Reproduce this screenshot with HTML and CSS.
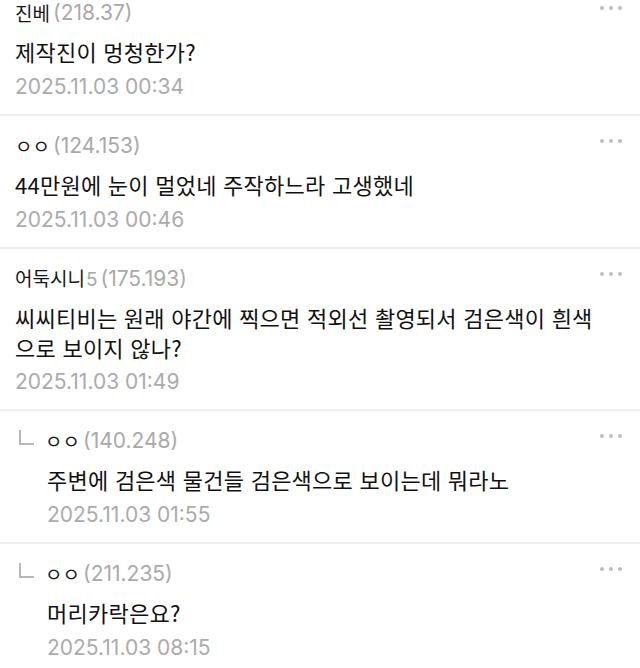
FILE: index.html
```html
<!DOCTYPE html>
<html lang="ko">
<head>
<meta charset="utf-8">
<link rel="stylesheet" href="styles.css">
</head>
<body>
<div class="list">
  <div class="comment first">
    <div class="meta">
      <div class="who"><span class="name">진베</span><span class="ip">(218.37)</span></div>
      <span class="more"><i></i><i></i><i></i></span>
    </div>
    <div class="body">
      <p class="text">제작진이 멍청한가?</p>
      <p class="date">2025.11.03 00:34</p>
    </div>
  </div>
  <div class="comment">
    <div class="meta">
      <div class="who"><span class="name">ㅇㅇ</span><span class="ip">(124.153)</span></div>
      <span class="more"><i></i><i></i><i></i></span>
    </div>
    <div class="body">
      <p class="text">44만원에 눈이 멀었네 주작하느라 고생했네</p>
      <p class="date">2025.11.03 00:46</p>
    </div>
  </div>
  <div class="comment">
    <div class="meta">
      <div class="who"><span class="name">어둑시니<span class="suffix">5</span></span><span class="ip">(175.193)</span></div>
      <span class="more"><i></i><i></i><i></i></span>
    </div>
    <div class="body">
      <p class="text">씨씨티비는 원래 야간에 찍으면 적외선 촬영되서 검은색이 흰색<br>으로 보이지 않나?</p>
      <p class="date short">2025.11.03 01:49</p>
    </div>
  </div>
  <div class="comment reply">
    <div class="meta">
      <div class="who"><span class="arrow"></span><span class="name">ㅇㅇ</span><span class="ip">(140.248)</span></div>
      <span class="more"><i></i><i></i><i></i></span>
    </div>
    <div class="body">
      <p class="text">주변에 검은색 물건들 검은색으로 보이는데 뭐라노</p>
      <p class="date">2025.11.03 01:55</p>
    </div>
  </div>
  <div class="comment reply last">
    <div class="meta">
      <div class="who"><span class="arrow"></span><span class="name">ㅇㅇ</span><span class="ip">(211.235)</span></div>
      <span class="more"><i></i><i></i><i></i></span>
    </div>
    <div class="body">
      <p class="text">머리카락은요?</p>
      <p class="date">2025.11.03 08:15</p>
    </div>
  </div>
</div>
</body>
</html>
```
FILE: styles.css
```css
html, body {
  margin: 0;
  padding: 0;
  background: #ffffff;
}
body {
  font-family: "Inter", "Noto Sans CJK KR", sans-serif;
  color: #111111;
  width: 640px;
  height: 668px;
  overflow: hidden;
}
.comment {
  padding: 17px 18px 14px 15px;
  border-bottom: 2px solid #efefef;
}
.comment.first {
  padding-top: 0;
}
.comment.last {
  border-bottom: none;
}
.meta {
  display: flex;
  justify-content: space-between;
  align-items: flex-start;
  height: 26px;
}
.who {
  display: flex;
  align-items: center;
  height: 26px;
  line-height: 26px;
}
.name {
  font-family: "Noto Sans CJK KR", sans-serif;
  font-size: 19px;
  color: #161616;
  margin-right: 3px;
}
.suffix {
  font-family: "Inter", sans-serif;
  color: #a9a9a9;
  font-size: 19px;
  margin-left: 1px;
}
.ip {
  font-size: 21px;
  color: #a9a9a9;
}
.reply .who {
  padding-left: 4px;
}
.reply .body {
  padding-left: 32px;
}
.arrow {
  width: 13px;
  height: 13px;
  border-left: 2px solid #b8b8b8;
  border-bottom: 2px solid #b8b8b8;
  margin-right: 11px;
  margin-top: -8px;
}
.more {
  display: flex;
  gap: 5px;
  padding: 6px 0 0 0;
}
.more i {
  display: block;
  width: 4px;
  height: 4px;
  border-radius: 50%;
  background: #bdbdbd;
}
.body p {
  margin: 0;
}
.text {
  font-family: "Noto Sans CJK KR", sans-serif;
  font-size: 22px;
  letter-spacing: 0.25px;
  line-height: 30px;
  margin-top: 10px !important;
  color: #111111;
}
.date {
  font-size: 21px;
  line-height: 26px;
  color: #ababab;
  margin-top: 8px !important;
}
.date.short {
  margin-top: 7px !important;
}
```
